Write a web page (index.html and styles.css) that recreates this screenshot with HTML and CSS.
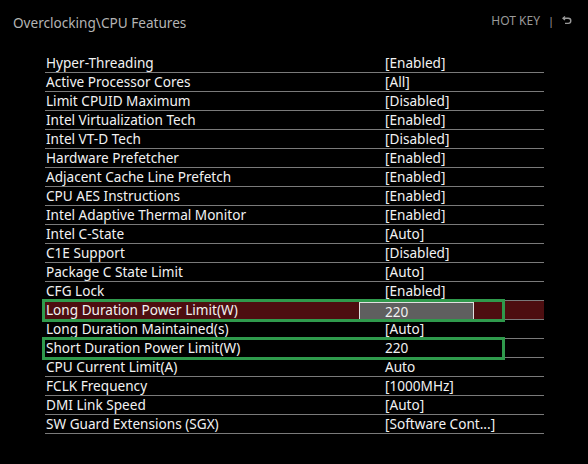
FILE: index.html
```html
<!DOCTYPE html>
<html lang="en">
	<head>
		<meta charset="UTF-8" />
		<title>CPU Features</title>
		<link rel="stylesheet" href="styles.css">
	</head>
	<body>
		<header class="top">
			<span class="crumb">Overclocking\CPU Features</span>
			<span class="hotkey">
				HOT KEY <span class="sep">|</span>
				<svg class="back" width="10" height="10" viewBox="0 0 10 10">
					<path d="M3 1.5 L1 3.2 L3 5" fill="none" stroke="#9a9a9a" stroke-width="1.4" />
					<path d="M1.3 3.2 H6.2 a2.6 2.6 0 0 1 0 5.2 H3" fill="none" stroke="#9a9a9a" stroke-width="1.4" />
				</svg>
			</span>
		</header>
		<ul class="list">
			<li class="row"><span class="name">Hyper-Threading</span><span class="val">[Enabled]</span></li>
			<li class="row"><span class="name">Active Processor Cores</span><span class="val">[All]</span></li>
			<li class="row"><span class="name">Limit CPUID Maximum</span><span class="val">[Disabled]</span></li>
			<li class="row"><span class="name">Intel Virtualization Tech</span><span class="val">[Enabled]</span></li>
			<li class="row"><span class="name">Intel VT-D Tech</span><span class="val">[Disabled]</span></li>
			<li class="row"><span class="name">Hardware Prefetcher</span><span class="val">[Enabled]</span></li>
			<li class="row"><span class="name">Adjacent Cache Line Prefetch</span><span class="val">[Enabled]</span></li>
			<li class="row"><span class="name">CPU AES Instructions</span><span class="val">[Enabled]</span></li>
			<li class="row"><span class="name">Intel Adaptive Thermal Monitor</span><span class="val">[Enabled]</span></li>
			<li class="row"><span class="name">Intel C-State</span><span class="val">[Auto]</span></li>
			<li class="row"><span class="name">C1E Support</span><span class="val">[Disabled]</span></li>
			<li class="row"><span class="name">Package C State Limit</span><span class="val">[Auto]</span></li>
			<li class="row"><span class="name">CFG Lock</span><span class="val">[Enabled]</span></li>
			<li class="row active boxed"><span class="name">Long Duration Power Limit(W)</span><span class="val"><span class="field">220</span></span></li>
			<li class="row"><span class="name">Long Duration Maintained(s)</span><span class="val">[Auto]</span></li>
			<li class="row boxed"><span class="name">Short Duration Power Limit(W)</span><span class="val">220</span></li>
			<li class="row"><span class="name">CPU Current Limit(A)</span><span class="val">Auto</span></li>
			<li class="row"><span class="name">FCLK Frequency</span><span class="val">[1000MHz]</span></li>
			<li class="row"><span class="name">DMI Link Speed</span><span class="val">[Auto]</span></li>
			<li class="row"><span class="name">SW Guard Extensions (SGX)</span><span class="val">[Software Cont...]</span></li>
		</ul>
	</body>
</html>
```
FILE: styles.css
```css
body {
	margin: 0;
	background: #000;
	color: #f2f2f2;
	font-family: 'Noto Sans', 'Open Sans', sans-serif;
	font-size: 13.6px;
	width: 588px;
	height: 464px;
	overflow: hidden;
}

.top {
	display: flex;
	justify-content: space-between;
	align-items: center;
	height: 44px;
	padding: 0 16px 0 13px;
}
.crumb {
	color: #b4b4b4;
	font-size: 13.6px;
	margin-top: 1px;
}
.hotkey {
	display: flex;
	align-items: center;
	gap: 8px;
	color: #9a9a9a;
	font-size: 12px;
	margin-top: -4px;
}
.sep {
	font-size: 11px;
}

.list {
	list-style: none;
	margin: 10px 0 0 45px;
	padding: 0;
	width: 499px;
}
.row {
	position: relative;
	display: flex;
	height: 18px;
	line-height: 18px;
	border-bottom: 1px solid #7a7a7a;
	padding-left: 1px;
}
.name {
	width: 339px;
	white-space: nowrap;
}
.val {
	white-space: nowrap;
}
.active {
	background: #4d0e10;
}
.field {
	display: inline-block;
	box-sizing: border-box;
	width: 115px;
	height: 17px;
	margin: 1px 0 0 -26px;
	padding-left: 25px;
	line-height: 17px;
	vertical-align: top;
	background: #5f5f5f;
	border: 1px solid #e0e0e0;
	border-bottom: none;
}
.boxed::after {
	content: '';
	position: absolute;
	left: -3px;
	right: 39px;
	top: -2px;
	bottom: -3px;
	border: 3px solid #2f9a4c;
}
```
